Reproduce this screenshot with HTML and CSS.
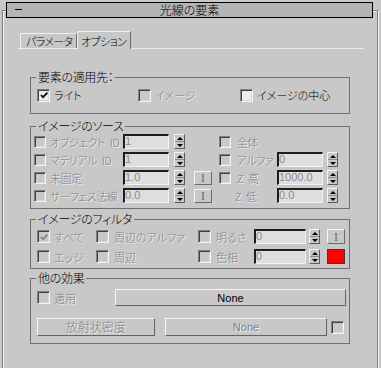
FILE: index.html
```html
<!DOCTYPE html>
<html lang="ja">
<head>
<meta charset="utf-8">
<title>光線の要素</title>
<link rel="stylesheet" href="styles.css">
</head>
<body>
<div class="rollout">
  <div class="header"><span class="minus"></span><span class="title">光線の要素</span></div>

  <div class="tabs">
    <div class="tab">パラメータ</div>
    <div class="tab active">オプション</div>
  </div>

  <fieldset class="group g1">
    <legend>要素の適用先：</legend>
    <div class="apply">
      <label class="chk"><span class="cb on"><svg viewBox="0 0 9 9"><polyline points="1,4 3,6.2 7.5,1.6"/></svg></span><span class="txt">ライト</span></label>
      <label class="chk dis"><span class="cb"></span><span class="txt">イメージ</span></label>
      <label class="chk"><span class="cb on"></span><span class="txt">イメージの中心</span></label>
    </div>
  </fieldset>

  <fieldset class="group g2">
    <legend>イメージのソース</legend>
    <div class="src">
      <span class="cb sm"></span><span class="lbl dis">オブジェクト ID</span><span class="inp">1</span><span class="spin"><i class="up"></i><i class="dn"></i></span><span></span>
      <span class="cb sm"></span><span class="lbl dis">全体</span><span></span><span></span>

      <span class="cb sm"></span><span class="lbl dis">マテリアル ID</span><span class="inp">1</span><span class="spin"><i class="up"></i><i class="dn"></i></span><span></span>
      <span class="cb sm"></span><span class="lbl dis">アルファ</span><span class="inp">0</span><span class="spin"><i class="up"></i><i class="dn"></i></span>

      <span class="cb sm"></span><span class="lbl dis">未固定</span><span class="inp">1.0</span><span class="spin"><i class="up"></i><i class="dn"></i></span><span class="ibtn">I</span>
      <span class="cb sm"></span><span class="lbl dis">Z 高</span><span class="inp">1000.0</span><span class="spin"><i class="up"></i><i class="dn"></i></span>

      <span class="cb sm"></span><span class="lbl dis">サーフェス法線</span><span class="inp">0.0</span><span class="spin"><i class="up"></i><i class="dn"></i></span><span class="ibtn">I</span>
      <span></span><span class="lbl dis zlow">Z 低</span><span class="inp">0.0</span><span class="spin"><i class="up"></i><i class="dn"></i></span>
    </div>
  </fieldset>

  <fieldset class="group g3">
    <legend>イメージのフィルタ</legend>
    <div class="flt">
      <span class="cb"><svg viewBox="0 0 9 9" class="gray"><polyline points="1,4 3,6.2 7.5,1.6"/></svg></span><span class="lbl dis">すべて</span>
      <span class="cb"></span><span class="lbl dis">周辺のアルファ</span>
      <span class="cb"></span><span class="lbl dis">明るさ</span>
      <span class="inp wide">0</span><span class="spin"><i class="up"></i><i class="dn"></i></span><span class="ibtn sw">I</span>

      <span class="cb"></span><span class="lbl dis">エッジ</span>
      <span class="cb"></span><span class="lbl dis">周辺</span>
      <span class="cb"></span><span class="lbl dis">色相</span>
      <span class="inp wide">0</span><span class="spin"><i class="up"></i><i class="dn"></i></span><span class="swatch"></span>
    </div>
  </fieldset>

  <fieldset class="group g4">
    <legend>他の効果</legend>
    <div class="fx1">
      <span class="cb"></span><span class="lbl dis">適用</span>
      <span class="btn none1">None</span>
    </div>
    <div class="fx2">
      <span class="btn radial dis">放射状密度</span>
      <span class="btn none2 dis">None</span>
      <span class="cb"></span>
    </div>
  </fieldset>
</div>
</body>
</html>
```

FILE: styles.css
```css
* { box-sizing: border-box; }

html, body {
  margin: 0;
  padding: 0;
  background: #c8c8c8;
}

body {
  width: 381px;
  height: 368px;
  overflow: hidden;
  font-family: "Noto Sans CJK JP", "Noto Sans", sans-serif;
  font-size: 11px;
  font-weight: 300;
  line-height: 14px;
  font-feature-settings: "palt";
  color: #000;
}

.rollout {
  margin: 10px 0 0 2px;
  width: 376px;
  height: 358px;
  border: 1px solid #7c7c7c;
  border-bottom: 0;
  box-shadow: 1px 1px 0 #f4f4f4, inset 1px 1px 0 #f4f4f4;
}

/* header bar */
.header {
  position: relative;
  margin: -9px 0 0 3px;
  width: 367px;
  height: 16px;
  background: #b4b4b4;
  border: 1px solid #000;
  display: flex;
  align-items: center;
  justify-content: center;
}
.header .minus {
  position: absolute;
  left: 8px;
  top: 6px;
  width: 7px;
  height: 1px;
  background: #000;
}
.header .title {
  font-size: 12px;
  line-height: 14px;
}

/* tabs */
.tabs {
  display: flex;
  align-items: flex-end;
  margin: 13px 0 0 15px;
  width: 346px;
  height: 18px;
  border-bottom: 1px solid #ececec;
}
.tab {
  height: 15px;
  width: 57px;
  margin-left: 2px;
  padding-left: 5px;
  line-height: 14px;
  white-space: nowrap;
  letter-spacing: -0.6px;
  border-top: 1px solid #f0f0f0;
  border-left: 1px solid #f0f0f0;
  border-right: 1px solid #6a6a6a;
  border-top-left-radius: 2px;
}
.tab.active {
  width: 54px;
  height: 18px;
  margin-left: 0;
  margin-bottom: -1px;
  padding-left: 3px;
  padding-top: 2px;
  background: #c8c8c8;
}

/* group boxes */
.group {
  margin: 0 0 0 27px;
  width: 320px;
  padding: 0;
  border: 1px solid #6e6e6e;
  min-width: 0;
}
.group legend {
  margin-left: 5px;
  padding: 0 2px;
  line-height: 14px;
  height: 14px;
  font-size: 12px;
  letter-spacing: -0.3px;
}
.g1 { margin-top: 21px; }
.g2 { margin-top: 5px; }
.g3 { margin-top: 3px; }
.g4 { margin-top: 2px; }

/* labels */
.dis {
  color: #808080;
  text-shadow: 1px 1px 0 #f2f2f2;
}
.lbl, .txt { white-space: nowrap; }

/* checkbox */
.cb {
  display: inline-flex;
  align-items: center;
  justify-content: center;
  width: 13px;
  height: 13px;
  border: 1px solid;
  border-color: #808080 #f4f4f4 #f4f4f4 #808080;
  box-shadow: inset 1px 1px 0 #404040, inset -1px -1px 0 #d6d6d6;
  background: #c8c8c8;
  flex: none;
}
.cb.on { background: #ececec; }
.cb.sm { width: 12px; height: 12px; }
.cb svg {
  width: 9px;
  height: 9px;
  margin: 1px 0 0 1px;
  fill: none;
  stroke: #000;
  stroke-width: 1.7;
}
.cb svg.gray { stroke: #808080; }

.chk {
  display: flex;
  align-items: center;
  gap: 4px;
}

/* group 1 */
.apply {
  display: grid;
  grid-template-columns: 101px 102px auto;
  padding: 4px 0 11px 6px;
}

/* group 2 grid */
.src {
  display: grid;
  grid-template-columns: 16px 73px 51px 20px 25px 18px 40px 50px 11px;
  grid-auto-rows: 15px;
  row-gap: 3px;
  align-items: center;
  padding: 1px 0 5px 3px;
}
.src .lbl { letter-spacing: -0.5px; word-spacing: 3px; }
.zlow { margin-left: -2px; }

/* inputs */
.inp {
  display: block;
  width: 46px;
  height: 15px;
  border-style: solid;
  border-width: 2px 1px 1px 2px;
  border-color: #1c1c1c #f2f2f2 #f2f2f2 #1c1c1c;
  background: #dedede;
  color: #8a8a8a;
  font-family: "Liberation Sans", Arial, sans-serif;
  font-weight: 400;
  font-size: 11px;
  line-height: 11px;
  padding-left: 0;
  font-feature-settings: normal;
}
.inp.wide { width: 52px; }

/* spinner */
.spin {
  display: flex;
  flex-direction: column;
  width: 11px;
  height: 15px;
  border: 1px solid;
  border-color: #f4f4f4 #5c5c5c #5c5c5c #f4f4f4;
  background: #c8c8c8;
}
.spin i {
  flex: 1;
  display: flex;
  align-items: center;
  justify-content: center;
}
.spin i.up { border-bottom: 1px solid #8c8c8c; }
.spin i.up::after {
  content: "";
  border-left: 3px solid transparent;
  border-right: 3px solid transparent;
  border-bottom: 3px solid #000;
}
.spin i.dn::after {
  content: "";
  border-left: 3px solid transparent;
  border-right: 3px solid transparent;
  border-top: 3px solid #000;
}

/* small I buttons */
.ibtn {
  display: flex;
  align-items: center;
  justify-content: center;
  width: 18px;
  height: 14px;
  border: 1px solid;
  border-color: #f4f4f4 #6a6a6a #6a6a6a #f4f4f4;
  font-family: "Liberation Serif", "Times New Roman", serif;
  font-weight: 400;
  font-size: 12px;
  color: #6c6c6c;
  line-height: 12px;
}
.ibtn.sw { width: 18px; height: 15px; }

.swatch {
  display: block;
  width: 18px;
  height: 15px;
  background: #ff0000;
  border: 1px solid #3a3a3a;
}

/* group 3 grid */
.flt {
  display: grid;
  grid-template-columns: 17px 42px 18px 84px 18px 38px 55px 18px 18px;
  grid-auto-rows: 15px;
  row-gap: 5px;
  align-items: center;
  padding: 3px 0 4px 6px;
}

/* buttons */
.btn {
  display: flex;
  align-items: center;
  justify-content: center;
  border: 1px solid;
  border-color: #f4f4f4 #646464 #646464 #f4f4f4;
  font-size: 12px;
}
.none1, .none2 {
  font-family: "Liberation Sans", Arial, sans-serif;
  font-weight: 400;
  font-size: 11px;
  font-feature-settings: normal;
}

/* group 4 */
.fx1 {
  display: flex;
  align-items: center;
  padding: 4px 0 0 6px;
  height: 21px;
}
.fx1 .lbl { margin-left: 4px; width: 61px; }
.none1 { width: 231px; height: 17px; }

.fx2 {
  display: flex;
  align-items: center;
  padding: 12px 0 7px 6px;
}
.radial { width: 118px; height: 18px; }
.none2 { width: 162px; height: 18px; margin-left: 10px; }
.fx2 .cb { margin-left: 4px; }
```
